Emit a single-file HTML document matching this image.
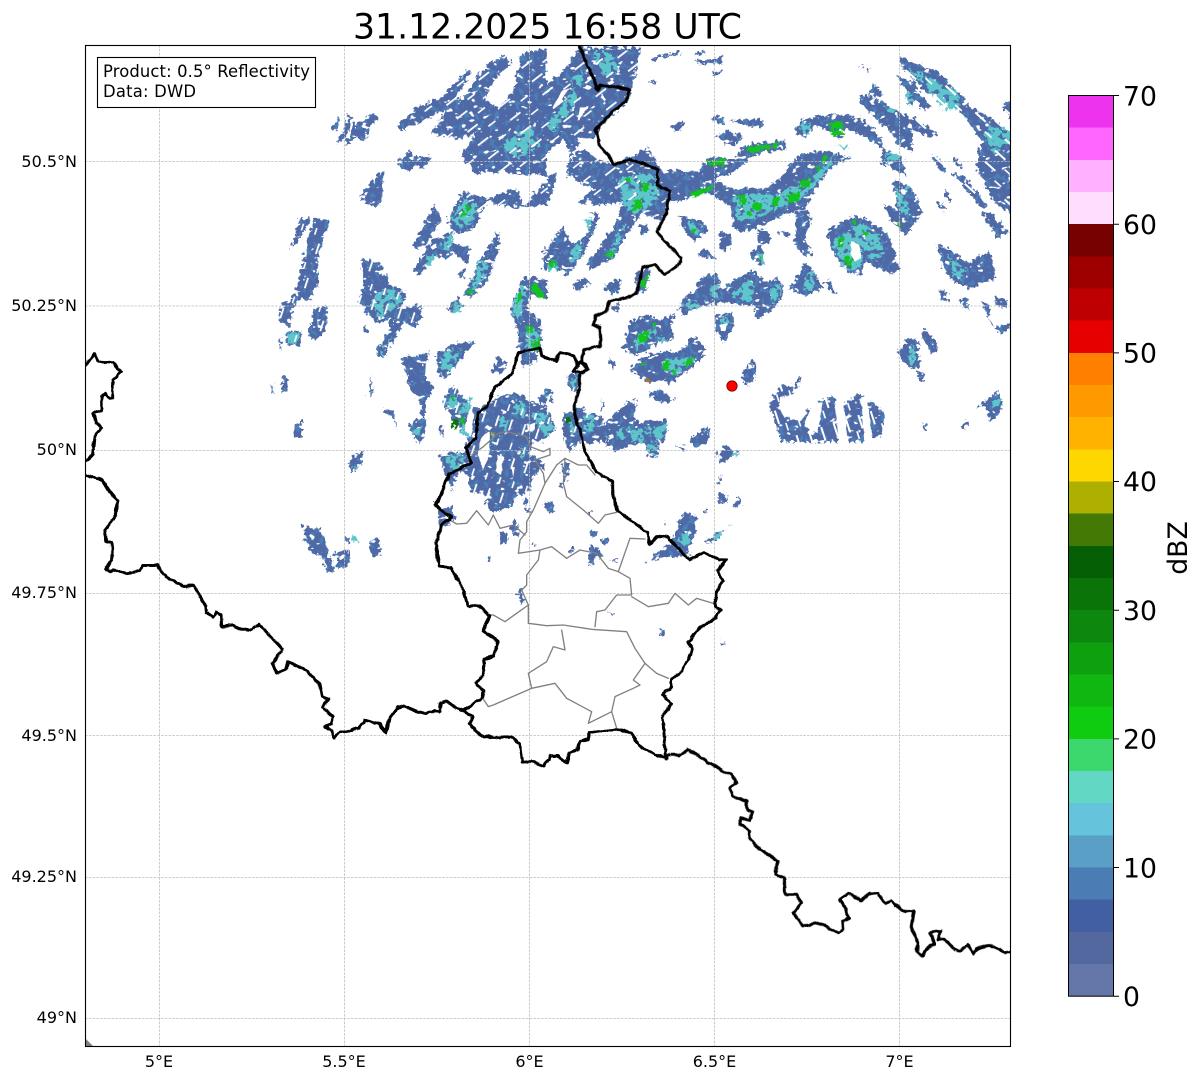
<!DOCTYPE html>
<html><head><meta charset="utf-8"><style>
html,body{margin:0;padding:0;background:#fff;width:1202px;height:1081px;overflow:hidden}
svg{display:block}
text{font-family:"DejaVu Sans","Liberation Sans",sans-serif;fill:#000}
.b{fill:#4f69a6}.m{fill:#4f8dbd}.t{fill:#5cc6cc}.g{fill:#12c41e}.d{fill:#0a7409}.w{fill:#fff}
.bd{fill:none;stroke:#000;stroke-width:9;stroke-linejoin:round;stroke-linecap:round}
.gr{fill:none;stroke:#808080;stroke-width:4;stroke-linejoin:round;stroke-linecap:round}
</style></head><body>
<svg width="1202" height="1081" viewBox="0 0 1202 1081" xmlns="http://www.w3.org/2000/svg">
<defs>
<clipPath id="ax"><rect x="85.5" y="45.5" width="925" height="1001"/></clipPath>
<filter id="fb" filterUnits="userSpaceOnUse" x="0" y="0" width="1202" height="1081" color-interpolation-filters="sRGB">
<feTurbulence type="turbulence" baseFrequency="0.16" numOctaves="2" seed="4" result="n"/>
<feDisplacementMap in="SourceGraphic" in2="n" scale="8" xChannelSelector="R" yChannelSelector="G" result="d"/>
<feTurbulence type="fractalNoise" baseFrequency="0.13 0.2" numOctaves="2" seed="9"/>
<feColorMatrix type="matrix" values="0 0 0 0 0 0 0 0 0 0 0 0 0 0 0 14 0 0 0 -3.8" result="hole"/>
<feComposite in="d" in2="hole" operator="in" result="c"/>
<feTurbulence type="fractalNoise" baseFrequency="0.2 0.16" numOctaves="2" seed="21"/>
<feColorMatrix type="matrix" values="0 0 0 0 0 0 0 0 0 0 0 0 0 0 0 14 0 0 0 -8" result="sp"/>
<feFlood flood-color="#4a7fb8"/>
<feComposite in2="sp" operator="in"/>
<feComposite in2="c" operator="in" result="mid"/>
<feMerge><feMergeNode in="c"/><feMergeNode in="mid"/></feMerge>
</filter>
<filter id="ft" filterUnits="userSpaceOnUse" x="0" y="0" width="1202" height="1081" color-interpolation-filters="sRGB">
<feTurbulence type="turbulence" baseFrequency="0.16" numOctaves="2" seed="7" result="n"/>
<feDisplacementMap in="SourceGraphic" in2="n" scale="8" xChannelSelector="R" yChannelSelector="G" result="d"/>
<feTurbulence type="fractalNoise" baseFrequency="0.18 0.2" numOctaves="2" seed="13"/>
<feColorMatrix type="matrix" values="0 0 0 0 0 0 0 0 0 0 0 0 0 0 0 16 0 0 0 -6.2" result="hole"/>
<feComposite in="d" in2="hole" operator="in"/>
</filter>
<filter id="fg" filterUnits="userSpaceOnUse" x="0" y="0" width="1202" height="1081" color-interpolation-filters="sRGB">
<feTurbulence type="turbulence" baseFrequency="0.2" numOctaves="2" seed="11" result="n"/>
<feDisplacementMap in="SourceGraphic" in2="n" scale="5" xChannelSelector="R" yChannelSelector="G" result="d"/>
<feTurbulence type="fractalNoise" baseFrequency="0.25" numOctaves="2" seed="17"/>
<feColorMatrix type="matrix" values="0 0 0 0 0 0 0 0 0 0 0 0 0 0 0 16 0 0 0 -5.2" result="hole"/>
<feComposite in="d" in2="hole" operator="in"/>
</filter>
<filter id="fw" filterUnits="userSpaceOnUse" x="0" y="0" width="1202" height="1081">
<feTurbulence type="turbulence" baseFrequency="0.1" numOctaves="1" seed="3" result="n"/>
<feDisplacementMap in="SourceGraphic" in2="n" scale="3" xChannelSelector="R" yChannelSelector="G"/>
</filter>
<pattern id="s1" width="41" height="17" patternUnits="userSpaceOnUse" patternTransform="rotate(-38)"><rect width="13" height="1.8" fill="#fff"/><rect x="20" y="8.5" width="9" height="1.6" fill="#fff"/></pattern>
<pattern id="s2" width="40" height="15" patternUnits="userSpaceOnUse" patternTransform="rotate(42)"><rect width="14" height="2" fill="#fff"/><rect x="20" y="8" width="9" height="1.6" fill="#fff"/></pattern>
<pattern id="s3" width="36" height="14" patternUnits="userSpaceOnUse" patternTransform="rotate(-72)"><rect width="11" height="1.8" fill="#fff"/><rect x="18" y="7" width="7" height="1.6" fill="#fff"/></pattern>
<pattern id="s5" width="30" height="13" patternUnits="userSpaceOnUse" patternTransform="rotate(72)"><rect width="14" height="2" fill="#fff"/><rect x="15" y="6.5" width="8" height="1.6" fill="#fff"/></pattern>
</defs>
<rect width="1202" height="1081" fill="#fff"/>
<g clip-path="url(#ax)">
<g filter="url(#fb)">
<g transform="translate(85,40) scale(.33333)">
<path class="b" d="M735 265L750 225L760 225L745 270ZM750 305L790 215L798 225L775 290ZM770 315L810 240L870 215L875 225L855 245L830 300L810 280L780 310ZM930 365L970 320L975 345L1005 340L1035 345L1000 385L990 365L960 390L935 370ZM815 470L880 390L890 395L880 480L865 497ZM930 250L1000 190L1060 170L1140 85L1155 90L1100 170L1130 170L1160 120L1210 60L1250 40L1275 60L1225 110L1190 170L1240 200L1280 140L1310 30L1380 20L1380 400L1240 390L1170 395L1120 340L1170 270L1115 295L1080 280L1030 280L1080 200L1020 230L940 265ZM1090 510L1130 445L1200 470L1290 440L1310 490L1380 420L1380 490L1280 497L1200 480L1160 560L1110 575L1085 550ZM975 610L1045 490L1060 530L1020 610L985 620ZM975 690L1040 590L1100 570L1090 600L1150 620L1140 670L1100 630L1070 650L1040 640L1000 705ZM1115 700L1135 670L1130 710ZM1130 760L1190 640L1235 570L1240 600L1200 720L1150 770ZM1080 800L1110 770L1130 790L1110 820ZM1270 800L1310 710L1380 710L1380 770L1330 760L1320 800L1360 840L1365 930L1300 920L1290 860ZM610 620L640 530L670 530L630 600ZM640 700L680 525L725 535L690 660L695 720L665 780L640 770L620 800L605 860L575 835L580 790L610 780ZM665 880L680 800L720 790L715 870L680 895ZM595 905L605 865L645 870L640 910ZM575 890L585 885L580 930ZM825 650L890 665L905 730L960 745L940 800L1000 790L1005 825L980 860L950 840L900 930L885 950L870 930L920 830L870 840L830 800L815 775L830 730ZM830 852L843 852L843 872L830 872ZM590 1005L600 1005L600 1048L580 1048ZM553 1027L557 1027L557 1050L553 1050ZM622 1145L645 1140L645 1188L620 1188ZM1370 620L1380 620L1380 690L1368 680Z"/>
</g>
<g transform="translate(545,40) scale(.33333)">
<path class="b" d="M0 130L60 70L100 18L280 18L260 130L240 180L160 250L140 290L100 290L70 350L50 290L0 330ZM60 365L110 320L150 350L200 370L300 320L340 385L450 390L490 345L560 350L590 310L710 295L715 320L620 340L560 390L500 415L560 440L650 440L700 410L750 340L800 325L910 345L850 380L800 450L770 500L680 530L600 570L560 560L550 490L480 450L380 480L360 480L340 540L290 510L260 540L200 650L130 680L120 660L200 560L230 480L150 490L90 480L140 440L60 400ZM0 620L50 550L70 600L105 600L145 520L125 510L160 515L105 640L60 700L0 660ZM400 520L470 540L480 570L440 600L400 550ZM275 550L300 550L305 575L285 580ZM515 570L550 580L555 610L535 630L520 610ZM630 560L665 570L670 600L640 610ZM700 565L730 570L725 585L700 575ZM612 625L640 615L655 665L640 670L615 650ZM450 640L470 620L505 650L470 645ZM745 510L780 500L795 530L770 590L800 640L770 640L745 610ZM840 570L900 530L930 520L1020 570L1060 680L1030 695L960 660L940 700L900 690L850 620ZM745 265L760 235L860 215L940 230L1000 280L1010 325L1070 345L1075 400L1040 385L1000 360L1005 320L950 280L900 260L880 290L850 270L810 250L770 285ZM935 170L960 160L1100 230L1175 275L1150 285L1090 260L1100 330L1060 310L1020 260L950 195ZM960 150L985 125L1005 160L975 165ZM1070 155L1095 150L1115 170L1090 190ZM1055 40L1180 95L1270 195L1340 230L1396 280L1396 520L1340 480L1290 380L1300 300L1260 230L1180 160L1140 150L1060 70ZM1045 100L1100 120L1150 190L1130 205L1090 160ZM1150 340L1170 340L1195 385L1180 390ZM1215 345L1225 345L1245 380L1235 380ZM1215 390L1250 400L1320 490L1300 500ZM1165 480L1180 480L1198 505L1190 510ZM1190 445L1200 445L1215 480L1205 480ZM1305 510L1330 510L1385 570L1350 590ZM1010 490L1050 500L1040 410L1085 430L1110 470L1125 510L1080 580L1045 555ZM1170 605L1220 630L1265 660L1330 625L1345 710L1270 740L1220 720L1190 680ZM1175 745L1205 750L1205 775L1185 775ZM1240 770L1260 765L1265 800L1250 795ZM1345 760L1385 780L1375 800L1340 780ZM1305 780L1330 785L1325 830L1340 860L1395 840L1395 855L1360 875L1330 850ZM1050 930L1090 890L1115 900L1120 970L1100 985L1075 965ZM1118 870L1135 860L1170 905L1165 935L1150 930ZM1110 990L1130 990L1130 1020L1115 1015ZM1295 1095L1350 1045L1370 1090L1330 1140L1320 1095ZM1130 1145L1140 1145L1140 1165L1130 1165ZM1245 1150L1265 1135L1255 1165ZM665 1095L700 1030L735 1030L765 1000L760 1020L720 1080L730 1130L790 1100L850 1060L890 1090L930 1050L1000 1100L1030 1130L1000 1180L960 1200L700 1200L690 1150ZM580 1000L610 960L625 960L620 1020L600 1030ZM395 800L420 760L450 745L460 705L510 695L525 750L560 710L620 685L650 720L690 710L715 745L680 800L630 830L620 790L540 780L480 790L440 800L410 820ZM725 740L780 660L830 740L770 760ZM830 720L850 715L870 755L860 755ZM500 820L555 810L560 860L530 900L505 860ZM230 920L250 840L300 820L340 835L385 815L370 860L380 890L340 900L300 930L260 940ZM250 980L300 940L340 930L385 930L420 910L440 880L475 920L470 940L425 985L400 1000L370 1030L350 1010L310 1025L280 1005ZM305 1050L340 1040L385 1075L370 1085L320 1075ZM185 945L205 965L195 985ZM0 1040L15 1050L15 1090L0 1080ZM45 1125L100 1100L170 1130L150 1170L240 1080L270 1070L260 1130L300 1150L365 1150L350 1200L50 1200ZM60 1010L100 1000L90 1040L70 1040ZM260 690L310 680L300 740L270 760ZM170 730L220 710L215 750L190 760ZM75 725L110 705L130 720L100 745L85 745ZM190 790L220 785L210 810ZM305 50L400 28L400 35L320 55ZM440 30L470 28L470 38L440 38ZM445 55L525 45L525 65L450 65ZM495 90L525 85L525 98L495 98ZM300 120L325 115L325 122L300 125ZM380 245L415 240L395 270L380 270ZM490 225L530 225L530 245L490 240ZM550 235L640 230L655 260L600 250ZM510 280L540 265L585 285L555 315L525 300ZM1365 190L1390 180L1396 240ZM938 70L970 80L965 90ZM0 400L28 390L10 470L0 480Z"/>
</g>
<g transform="translate(280,340) scale(.33333)">
<path class="b" d="M470 340L550 330L560 290L520 240L480 180L510 130L570 200L610 190L650 165L700 150L740 175L790 190L820 260L780 300L750 300L740 340L770 350L790 380L750 400L745 440L700 470L690 495L630 510L600 450L570 450L555 400L530 385L510 445L490 400ZM848 210L880 215L895 300L860 330L845 260ZM900 200L940 215L960 270L1000 270L1040 250L1060 250L1090 235L1150 235L1160 260L1130 300L1130 350L1100 340L1090 300L1040 310L1000 330L960 290L920 305L895 270ZM1220 290L1280 255L1280 300L1245 320ZM1305 340L1330 315L1375 325L1345 350L1315 365ZM1185 305L1210 320L1205 328ZM1310 420L1318 395L1316 425ZM1305 450L1335 460L1330 485L1310 480ZM1350 495L1375 465L1378 485L1360 500ZM1205 510L1245 520L1240 570L1215 630L1230 640L1190 640L1110 655L1115 635L1165 610ZM1270 600L1325 560L1320 585L1275 605ZM1260 505L1275 505L1275 515L1260 515ZM465 510L510 490L520 525L500 550L475 550ZM650 570L675 570L675 600L655 615ZM685 560L700 530L715 580L695 580ZM785 480L810 475L815 510L795 515ZM835 370L860 360L860 410L845 420ZM830 420L840 420L838 440L830 438ZM725 470L735 470L745 510L735 510ZM925 565L945 565L945 585L930 585ZM960 595L975 590L985 605L965 605ZM925 615L945 615L965 650L935 640L935 670L915 665L920 645ZM860 618L875 618L875 628L860 628ZM920 505L930 505L930 515L920 515ZM985 655L1005 650L1000 662ZM615 645L625 645L625 658L615 658ZM750 600L758 600L758 612L750 612ZM705 750L720 745L730 785L715 780ZM1135 860L1148 860L1145 878L1132 878ZM1318 900L1328 900L1328 908L1318 908ZM975 810L998 815L998 820L978 815ZM60 548L100 560L115 555L135 620L160 690L135 690L120 640L85 630ZM155 635L200 620L200 670L165 680L165 650ZM195 580L205 600L195 605L190 585ZM260 600L285 585L300 635L270 650ZM195 360L240 325L242 365L210 390ZM40 243L57 243L60 285L37 285ZM380 260L400 230L440 230L415 305L390 280ZM305 200L335 205L345 270L335 230L305 215ZM260 165L270 95L272 150ZM360 50L440 30L425 100L455 130L440 170L420 240L415 180L385 140ZM460 40L530 0L580 0L530 60L490 110L470 100ZM630 90L650 40L675 60L660 95ZM470 255L485 250L480 285ZM955 210L962 170L965 212ZM1050 180L1065 175L1040 240L1030 220ZM855 100L890 90L880 145L865 145ZM710 10L770 0L760 60L720 75ZM765 165L810 145L805 175L770 185ZM1090 660L1098 660L1098 670L1090 670ZM1145 540L1155 545L1158 552Z"/>
</g>
</g>
<g filter="url(#ft)">
<g transform="translate(85,40) scale(.33333)">
<path class="t" d="M1095 530L1130 470L1170 490L1160 540L1120 560ZM1010 670L1020 640L1050 635L1030 670ZM1060 620L1085 570L1100 590L1080 630ZM1150 760L1175 650L1210 670L1170 740ZM1090 810L1110 780L1130 790L1115 815ZM1310 880L1335 850L1360 880L1350 930L1320 920ZM1240 310L1330 250L1360 310L1290 350ZM850 780L885 740L920 740L950 770L880 830ZM880 930L920 880L915 900L885 945ZM600 905L605 870L640 870L630 905ZM1275 800L1300 730L1320 740L1300 830L1280 830Z"/>
</g>
<g transform="translate(545,40) scale(.33333)">
<path class="t" d="M140 30L190 30L215 90L175 100L150 60ZM0 250L80 140L95 170L20 270ZM70 110L105 90L110 130L80 135ZM210 410L310 385L335 430L330 480L260 520L230 490ZM180 640L210 580L240 530L210 620L190 650ZM0 670L30 650L40 680L0 690ZM60 630L105 600L95 650L70 660ZM110 530L135 530L125 570ZM560 470L640 450L690 460L750 430L790 410L830 370L870 340L850 370L780 460L700 500L620 530L570 540ZM755 250L790 245L785 275L760 275ZM870 310L905 315L895 325ZM1010 340L1050 330L1060 350L1020 365ZM1075 150L1110 165L1085 190ZM1075 75L1150 110L1230 145L1240 200L1180 205L1150 150ZM1330 250L1396 270L1396 310L1350 290ZM860 590L900 570L950 540L1000 590L1010 640L970 650L940 620L950 670L900 690L860 620ZM1070 430L1095 440L1085 460ZM1200 640L1260 680L1240 720L1210 680ZM550 760L600 710L620 720L620 790L590 780ZM490 730L515 730L520 770L490 760ZM670 745L700 730L700 770L670 790ZM770 700L800 690L800 740L775 755ZM400 790L440 770L470 800L430 800ZM260 890L310 860L325 850L330 870L300 900L265 925ZM330 880L360 890L350 900ZM340 960L390 950L430 940L450 950L410 975L385 1000L360 990ZM100 1130L140 1130L140 1160ZM290 1170L360 1160L340 1195ZM200 1170L250 1150L230 1195ZM1330 1080L1360 1060L1365 1085L1340 1100ZM1085 920L1105 910L1105 960L1090 970ZM630 630L650 640L650 665L635 660ZM515 830L540 820L545 850L520 850ZM65 1015L90 1015L80 1040ZM1040 430L1080 480L1090 520L1060 510ZM420 540L460 545L455 580L430 570ZM1010 195L1050 205L1030 215ZM1310 270L1330 250L1380 300L1340 340Z"/>
</g>
<g transform="translate(280,340) scale(.33333)">
<path class="t" d="M490 340L550 340L545 370L510 390ZM490 170L525 160L525 200L490 200ZM530 180L570 165L560 210L540 235ZM540 240L575 265L560 290L535 270ZM600 285L635 270L625 320L600 320ZM700 170L730 190L725 225L700 215ZM650 225L680 235L670 265L650 260ZM745 210L790 215L815 260L790 290ZM715 310L730 330L720 350ZM780 160L810 155L800 170ZM910 220L935 225L930 265L910 270ZM860 230L880 240L880 280L865 270ZM1040 265L1085 260L1080 300L1050 300ZM1100 260L1155 245L1140 280L1100 280ZM1095 310L1130 300L1120 340L1100 335ZM870 110L885 100L875 140ZM390 265L420 250L415 280L400 285ZM1190 590L1230 560L1220 610L1195 610ZM1285 590L1320 565L1310 590ZM1340 340L1370 330L1360 345ZM475 30L540 20L500 90L475 80ZM210 375L235 370L225 388L205 385ZM210 565L230 600L220 605ZM1335 548L1350 545L1345 552Z"/>
</g>
</g>
<g filter="url(#fg)">
<g transform="translate(85,40) scale(.33333)">
<path class="g" d="M1120 530L1140 490L1155 500L1130 530ZM1135 760L1160 740L1165 755ZM1290 800L1295 750L1310 760ZM1330 740L1345 720L1380 770L1360 770ZM1320 860L1340 850L1340 880L1320 880ZM1335 900L1360 890L1360 930L1340 930Z"/>
</g>
<g transform="translate(545,40) scale(.33333)">
<path class="g" d="M225 420L255 405L250 425ZM285 425L310 425L305 450L285 450ZM260 480L290 470L285 500L260 510ZM170 640L205 630L195 650ZM5 665L30 655L30 675L10 680ZM480 360L540 350L530 375L490 375ZM430 455L500 430L490 450L440 470ZM575 460L600 460L600 490L580 490ZM620 485L650 490L640 510L615 500ZM680 470L700 465L695 495L675 495ZM720 460L765 450L755 480L730 485ZM760 420L795 410L790 435L765 440ZM805 375L825 380L820 395ZM828 355L845 335L840 365L825 365ZM600 510L620 510L610 530ZM845 245L885 240L895 280L860 285ZM875 590L895 590L885 620L875 610ZM890 640L920 650L915 680L895 660ZM950 570L970 570L960 590ZM915 535L930 535L925 555ZM270 880L310 870L300 900L280 905ZM315 845L330 845L325 860ZM345 965L370 955L370 985L350 985ZM410 965L445 945L440 970L415 980ZM375 985L395 985L385 1005ZM285 965L295 965L290 985ZM280 725L310 695L300 735L285 745ZM435 560L450 560L450 575L435 575ZM1050 545L1065 545L1060 560ZM640 640L650 650L645 660ZM600 320L700 305L690 320L610 335Z"/>
<path d="M300 1010L305 1008L315 1025L305 1025Z" fill="#c66a10"/>
<path class="d" d="M60 1130L75 1125L75 1145L62 1145Z"/>
</g>
<g transform="translate(280,340) scale(.33333)">
<path class="d" d="M513 232L530 232L530 262L515 262Z"/>
<path class="g" d="M540 230L555 230L550 250L540 245ZM505 165L520 165L515 180Z"/>
<path d="M628 270L638 270L638 285L628 285Z" fill="#e2a800"/>
</g>
</g>
<g filter="url(#fw)">
<g transform="translate(545,40) scale(.33333)">
<path class="w" d="M700 1070L725 1065L735 1120L715 1130L700 1100ZM915 600L940 610L945 650L925 660L915 640ZM45 150L70 140L40 190L20 200ZM100 200L130 195L95 240ZM520 850L545 845L540 870L525 870Z"/>
</g>
<g transform="translate(280,340) scale(.33333)">
<path class="w" d="M600 290L625 270L625 340L605 390L590 340ZM650 340L670 350L660 400L645 390ZM740 250L765 245L760 270L740 270ZM690 380L700 380L695 410ZM550 270L565 200L580 220L570 285Z"/>
</g>
<path class="w" d="M783 398L798 395L806 412L800 420L786 416ZM803 425L812 400L822 402L816 432ZM834 400L842 398L848 445L838 445ZM860 396L866 394L872 445L864 445ZM884 408L892 410L892 445L880 445Z"/>
</g>
<path fill="url(#s1)" d="M395 60L640 50L640 200L540 200L560 290L440 200L400 130Z"/>
<path fill="url(#s2)" d="M890 50L1010 50L1010 215L950 215Z"/>
<path fill="url(#s3)" d="M430 380L600 380L560 510L470 510Z"/>
<path fill="url(#s3)" d="M280 210L420 210L420 350L280 350Z"/>
<path fill="url(#s5)" d="M765 375L895 375L895 450L765 450Z"/>
<g fill="none" stroke="#bdbdbd" stroke-width=".8" stroke-dasharray="2.6 1.2">
<path d="M159.5 45V1046M344.5 45V1046M529.5 45V1046M714.5 45V1046M899.5 45V1046"/>
<path d="M85 161.5H1010M85 306H1010M85 450.5H1010M85 593.5H1010M85 735.5H1010M85 877.5H1010M85 1018.5H1010"/>
</g>
<g transform="translate(280,340) scale(.33333)">
<path class="gr" d="M510 540L530 552L560 550L590 512L625 555L640 525L660 565L700 555L735 585"/>
<path class="gr" d="M655 280L680 275L740 290L750 320L790 335L810 325L810 345L765 360L790 400L795 430L760 510L740 545L740 575L720 600L715 640L780 630L775 660L740 705L740 735L725 750L745 795L745 850L800 857L850 855L935 868L1040 875L1065 925L1095 970L1060 1020L1080 1035L1060 1045L1005 1070L995 1115L925 1150L935 1115L860 1075L825 1030L755 1045L745 1000L800 965L820 920L855 930L845 870"/>
<path class="gr" d="M855 355L830 375L795 430M855 355L895 375L920 375L945 405M855 355L850 430L860 470L910 510L955 550L975 525L1010 517M780 630L815 620L860 655L900 630L950 640L985 685L1015 695L1050 595L1095 597M1015 695L1050 715L1055 765L1010 765L975 810L950 815L945 860M1055 770L1105 800L1165 790L1185 760L1225 795L1250 775L1300 790M1095 970L1130 1000L1165 1015M755 1045L720 1060L640 1095L625 1100L605 1070M995 1115L1010 1165M745 795L710 820L675 845L640 825L625 825M575 345L610 320L655 280"/>
</g>
<g filter="url(#fw)">
<g transform="translate(85,340) scale(.33333)">
<path class="bd" d="M0 70L25 40L35 62L85 65L95 85L108 92L80 118L80 172L68 170L58 157L47 165L47 208L22 218L30 245L45 260L25 290L20 340L3 358"/>
<path class="bd" d="M0 403L50 417L70 450L95 480L90 520L58 565L62 600L77 605L83 640L62 685L72 692L80 685L100 692L120 697L145 693L160 688L170 672L212 672L240 708L298 738L322 732L358 795L360 815L383 828L390 813L405 822L407 857L440 853L460 862L495 867L520 850L590 925L560 965L572 995L600 985L607 962L660 987L700 1028L708 1065L727 1073L712 1098L740 1127L738 1148L718 1157L735 1167L745 1190L762 1173L780 1173L818 1160L838 1137L875 1147L895 1172"/>
</g>
<g transform="translate(280,340) scale(.33333)">
<path class="bd" d="M250 1137L300 1150L315 1175L325 1133L350 1100L370 1095L410 1112L432 1117L460 1110L475 1113L480 1085L495 1080L545 1110L575 1125L565 1150L600 1185L640 1190L690 1187L717 1210L725 1265L750 1260L790 1275L810 1245L830 1245L858 1267L865 1235L890 1225L897 1200L920 1195L925 1175L1010 1165L1050 1175L1075 1215L1120 1240L1155 1252"/>
<path class="bd" d="M775 20L710 35L695 95L640 140L620 195L590 215L585 290L555 320L570 365L505 400L465 495L510 530L480 555L465 610L475 675L510 680L545 740L560 795L600 797L625 825L605 870L650 900L640 945L610 955L605 1005L585 1025L607 1050L605 1070L545 1110"/>
<path class="bd" d="M775 20L785 45L825 60L838 35L880 45L890 75L878 90L900 95L918 85L912 68L895 62L890 75"/>
<path class="bd" d="M880 220L905 290L910 330L935 375L945 395L995 420L995 460L1010 510L1100 575L1105 610L1130 585L1160 590L1225 655L1270 635L1315 655L1335 655L1310 690L1325 720L1305 755L1305 800L1320 805L1305 830L1255 860L1222 905L1235 925L1205 990L1170 1015L1170 1040L1145 1060L1170 1090L1145 1130L1155 1250"/>
</g>
<g transform="translate(545,40) scale(.33333)">
<path class="bd" d="M100 18L150 130L155 145L165 132L250 145L240 180L200 210L150 265L160 310L205 370L250 355L300 370L335 385L335 435L372 450L360 520L332 572L380 625L405 650L400 670L355 700L325 670L290 680L270 760L240 770L190 780L180 810L150 825L140 850L160 860L165 915L115 925L105 960L125 985L100 1000L100 1040L85 1090L85 1120L95 1150"/>
<circle cx="154" cy="143" r="8"/>
</g>
<g transform="translate(640,720) scale(.33333)">
<path class="bd" d="M75 115L80 103L115 103L140 85L175 107L205 128L225 135L250 155L270 160L287 183L265 200L275 225L318 240L318 265L335 272L325 298L298 290L295 310L325 330L325 350L350 380L410 420L403 460L430 470L432 520L467 520L480 545L457 575L485 615L535 607L592 638L607 625L605 600L625 590L612 560L595 535L622 517L660 538L685 517L710 518L735 550L750 538L785 570L818 570L810 620L830 665L828 695L845 705L860 680L880 670L868 635L900 630L890 655L910 653L940 685L955 690L980 672L1000 698L1010 682L1045 672L1075 685L1095 695L1125 690"/>
</g>
</g>
<path d="M85 1038L94 1047H85Z" fill="#808080"/>
</g>
<circle cx="732" cy="386" r="5.2" fill="#f00" stroke="#7a0000" stroke-width=".8"/>
<rect x="85.5" y="45.5" width="925" height="1001" fill="none" stroke="#000" stroke-width="1.1"/>
<rect x="97.5" y="57.5" width="218" height="50" fill="#fff" stroke="#000" stroke-width="1.1"/>
<text x="103" y="77" font-size="16.4" textLength="207">Product: 0.5° Reflectivity</text>
<text x="103" y="97" font-size="16.4" textLength="93">Data: DWD</text>
<text x="547.5" y="38.5" font-size="34.67" text-anchor="middle" textLength="389">31.12.2025 16:58 UTC</text>
<g font-size="16" text-anchor="end">
<text x="77" y="167">50.5°N</text><text x="77" y="311">50.25°N</text><text x="77" y="455">50°N</text><text x="77" y="598">49.75°N</text><text x="77" y="741">49.5°N</text><text x="77" y="882">49.25°N</text><text x="77" y="1023">49°N</text>
</g>
<g font-size="16" text-anchor="middle">
<text x="159" y="1067">5°E</text><text x="344" y="1067">5.5°E</text><text x="529.5" y="1067">6°E</text><text x="714.5" y="1067">6.5°E</text><text x="899.5" y="1067">7°E</text>
</g>
<g shape-rendering="crispEdges">
<rect x="1068" y="95.5" width="46" height="32.6" fill="#EE33EE"/>
<rect x="1068" y="127.7" width="46" height="32.6" fill="#FF66FF"/>
<rect x="1068" y="159.9" width="46" height="32.6" fill="#FFB0FF"/>
<rect x="1068" y="192" width="46" height="32.6" fill="#FFDDFF"/>
<rect x="1068" y="224.2" width="46" height="32.6" fill="#770000"/>
<rect x="1068" y="256.4" width="46" height="32.6" fill="#9E0000"/>
<rect x="1068" y="288.5" width="46" height="32.6" fill="#BF0000"/>
<rect x="1068" y="320.7" width="46" height="32.6" fill="#E60000"/>
<rect x="1068" y="352.9" width="46" height="32.6" fill="#FF7F00"/>
<rect x="1068" y="385" width="46" height="32.6" fill="#FF9900"/>
<rect x="1068" y="417.2" width="46" height="32.6" fill="#FFB300"/>
<rect x="1068" y="449.4" width="46" height="32.6" fill="#FFD700"/>
<rect x="1068" y="481.5" width="46" height="32.6" fill="#ADB000"/>
<rect x="1068" y="513.7" width="46" height="32.6" fill="#457905"/>
<rect x="1068" y="545.9" width="46" height="32.6" fill="#055F05"/>
<rect x="1068" y="578" width="46" height="32.6" fill="#0A7409"/>
<rect x="1068" y="610.2" width="46" height="32.6" fill="#0D870D"/>
<rect x="1068" y="642.4" width="46" height="32.6" fill="#0FA00F"/>
<rect x="1068" y="674.5" width="46" height="32.6" fill="#10B710"/>
<rect x="1068" y="706.7" width="46" height="32.6" fill="#10CC10"/>
<rect x="1068" y="738.9" width="46" height="32.6" fill="#3CD86E"/>
<rect x="1068" y="771" width="46" height="32.6" fill="#62D8C4"/>
<rect x="1068" y="803.2" width="46" height="32.6" fill="#65C3DC"/>
<rect x="1068" y="835.4" width="46" height="32.6" fill="#5A9FC6"/>
<rect x="1068" y="867.5" width="46" height="32.6" fill="#4B7CB4"/>
<rect x="1068" y="899.7" width="46" height="32.6" fill="#425FA3"/>
<rect x="1068" y="931.9" width="46" height="32.6" fill="#52689F"/>
<rect x="1068" y="964" width="46" height="32" fill="#6577A8"/>
</g>
<rect x="1068.5" y="95.5" width="45" height="900.7" fill="none" stroke="#000" stroke-width="1"/>
<path d="M1113.5 95.5h5.5M1113.5 224.2h5.5M1113.5 352.9h5.5M1113.5 481.5h5.5M1113.5 610.2h5.5M1113.5 738.9h5.5M1113.5 867.5h5.5M1113.5 996.2h5.5" stroke="#000" stroke-width="1"/>
<g font-size="26.67">
<text x="1123" y="105.5">70</text><text x="1123" y="234">60</text><text x="1123" y="362.7">50</text><text x="1123" y="491">40</text><text x="1123" y="620">30</text><text x="1123" y="748.7">20</text><text x="1123" y="877.5">10</text><text x="1123" y="1006">0</text>
</g>
<text transform="translate(1187,548) rotate(-90)" font-size="26.67" text-anchor="middle">dBZ</text>
</svg>
</body></html>
